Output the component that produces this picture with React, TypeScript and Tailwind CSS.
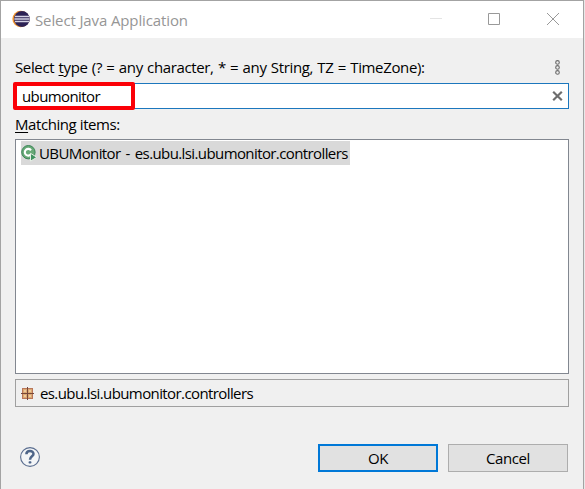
import type { ReactNode } from "react";

function EclipseLogo() {
  return (
    <svg width="18" height="18" viewBox="0 0 18 18" className="block shrink-0">
      <circle cx="8.7" cy="9" r="8.3" fill="#f0942c" />
      <circle cx="9.8" cy="9" r="7.9" fill="#6a4a5c" />
      <circle cx="10" cy="9" r="7.7" fill="#2c2255" />
      <path d="M3 6.5H17M2.4 9H17.6M3 11.5H17" stroke="#d5d3e4" strokeWidth="1.3" />
    </svg>
  );
}

function ClassIcon() {
  return (
    <svg width="17" height="17" viewBox="0 0 17 17" className="block shrink-0">
      <circle cx="7.4" cy="7.2" r="6.7" fill="#67a977" stroke="#3c8558" strokeWidth="1" />
      <path d="M10 5.3A3.4 3.4 0 1 0 10 9.2" fill="none" stroke="#fff" strokeWidth="2.1" />
      <path d="M9.5 8.3L15.8 12.3L9.5 16.2Z" fill="#3f9360" stroke="#e6efe6" strokeWidth="1" />
    </svg>
  );
}

function PackageIcon() {
  return (
    <svg width="13" height="13" viewBox="0 0 13 13" className="block shrink-0">
      <rect x="1.5" y="1.5" width="10" height="10" fill="#dca873" stroke="#b9775a" />
      <path d="M3 3h2v2H3zM8 3h2v2H8zM3 8h2v2H3zM8 8h2v2H8z" fill="#edcb9c" />
      <path d="M6.5 0V13M0 6.5H13" stroke="#76483a" />
    </svg>
  );
}

function HelpIcon() {
  return (
    <svg width="20" height="20" viewBox="0 0 20 20" className="block">
      <circle cx="10" cy="10" r="9.4" fill="#f3f5f7" stroke="#5a6d8f" strokeWidth="1.1" />
      <path d="M6.4 7.2C6.4 2.8 13.5 2.9 13.5 7C13.5 9.5 10 9.3 10 12.8" fill="none" stroke="#4d6488" strokeWidth="2.5" />
      <rect x="8.6" y="14.2" width="2.8" height="2.4" rx=".8" fill="#4d6488" />
    </svg>
  );
}

function Label({ children, className }: { children: ReactNode; className: string }) {
  return <span className={`block whitespace-nowrap leading-5 ${className}`}>{children}</span>;
}

export default function App() {
  return (
    <div className="flex h-[489px] w-[585px] bg-[#e8e8e8] font-['Open_Sans','Noto_Sans',sans-serif] text-[15px] text-black">
      <div className="flex w-[584px] flex-col border-x border-t border-[#a3a3a3] bg-[#f0f0f0]">
        <header className="flex h-[37px] shrink-0 items-start bg-white pl-[11px] pt-[9px]">
          <EclipseLogo />
          <Label className="ml-[5px] w-[395px] text-[#969696] tracking-[-0.12px]">Select Java Application</Label>
          <svg width="131" height="16" viewBox="0 0 131 16" className="block shrink-0" fill="none">
            <path d="M0 8.5H12" stroke="#e4e4e4" />
            <path d="M58.5 3.5H69.5V14.5H58.5Z" stroke="#999" />
            <path d="M117 3L129 15M129 3L117 15" stroke="#999" />
          </svg>
        </header>

        <main className="flex flex-col px-[14px] pt-[19px]">
          <div className="flex h-[26px] items-start justify-between pr-[8px]">
            <Label className="tracking-[-0.36px] [word-spacing:0.75px]">
              Select <span className="underline underline-offset-2">t</span>ype (? = any character, * = any String, TZ = TimeZone):
            </Label>
            <svg width="7" height="15" viewBox="0 0 7 15" className="mt-[3px] block" fill="none" stroke="#6b6b6b" strokeWidth="1.1">
              <circle cx="3.5" cy="2.4" r="1.8" />
              <circle cx="3.5" cy="7.4" r="1.8" />
              <circle cx="3.5" cy="12.4" r="1.8" />
            </svg>
          </div>

          <div className="relative flex h-[26px] w-[554px] items-center justify-between border border-[#1c77bd] bg-white pl-[6px] pr-[5px]">
            <Label className="tracking-[-0.6px]">ubumonitor</Label>
            <svg width="11" height="10" viewBox="0 0 11 10" className="block">
              <path d="M1.2 .8L9.8 9.2M9.8 .8L1.2 9.2" stroke="#6d6d6d" strokeWidth="2.2" />
            </svg>
            <div className="absolute -left-[3px] -top-[2px] h-[28px] w-[122px] rounded-[2px] border-4 border-[#fb0007]" />
          </div>

          <Label className="mt-[5px] h-[25px] tracking-[-0.42px]">
            <span className="underline underline-offset-2">M</span>atching items:
          </Label>

          <div className="h-[235px] w-[554px] border border-[#828790] bg-white pl-[5px] pt-px">
            <div className="flex h-6 w-[329px] items-center bg-[#d9d9d9]">
              <ClassIcon />
              <Label className="ml-px tracking-[-0.6px] [word-spacing:1.7px]">UBUMonitor - es.ubu.lsi.ubumonitor.controllers</Label>
            </div>
          </div>

          <div className="mt-[5px] flex h-[28px] w-[554px] items-center border border-[#a0a0a0] pl-[5px]">
            <PackageIcon />
            <Label className="ml-[6px] tracking-[-0.6px]">es.ubu.lsi.ubumonitor.controllers</Label>
          </div>

          <footer className="mt-[37px] flex">
            <button className="ml-[5px] mt-[3px] h-5 w-5" aria-label="Help">
              <HelpIcon />
            </button>
            <button className="ml-[278px] h-7 w-[120px] border-2 border-[#0078d7] bg-[#e1e1e1]">
              <Label className="tracking-[-0.32px]">OK</Label>
            </button>
            <button className="ml-[10px] h-7 w-[120px] border border-[#adadad] bg-[#e1e1e1]">
              <Label className="tracking-[-0.4px]">Cancel</Label>
            </button>
          </footer>
        </main>
      </div>
    </div>
  );
}
